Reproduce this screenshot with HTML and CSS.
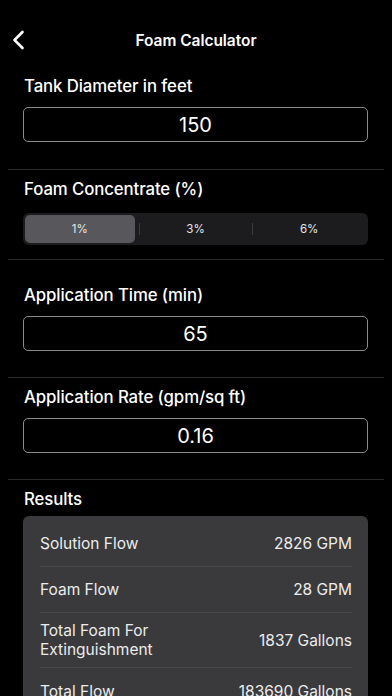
FILE: index.html
```
<!DOCTYPE html>
<html lang="en">
<head>
<meta charset="utf-8">
<title>Foam Calculator</title>
<link rel="stylesheet" href="styles.css">
</head>
<body>
<div class="screen">
  <header class="nav">
    <div class="nav-left">
      <svg class="back" width="14" height="20" viewBox="0 0 14 20"><path d="M11.5 2 L3.5 10 L11.5 18" fill="none" stroke="#fff" stroke-width="2.6" stroke-linecap="round" stroke-linejoin="round"/></svg>
    </div>
    <div class="nav-title">Foam Calculator</div>
    <div class="nav-right"></div>
  </header>

  <section class="section s-tank">
    <div class="label">Tank Diameter in feet</div>
    <div class="input">150</div>
  </section>

  <section class="section s-conc">
    <div class="label">Foam Concentrate (%)</div>
    <div class="segmented">
      <div class="seg selected">1%</div>
      <div class="seg">3%</div>
      <div class="seg">6%</div>
    </div>
  </section>

  <section class="section s-time">
    <div class="label">Application Time (min)</div>
    <div class="input">65</div>
  </section>

  <section class="section s-rate">
    <div class="label">Application Rate (gpm/sq ft)</div>
    <div class="input">0.16</div>
  </section>

  <section class="results">
    <div class="label">Results</div>
    <div class="card">
      <div class="row"><div class="row-name">Solution Flow</div><div class="row-val">2826 GPM</div></div>
      <div class="row"><div class="row-name">Foam Flow</div><div class="row-val">28 GPM</div></div>
      <div class="row"><div class="row-name">Total Foam For<br>Extinguishment</div><div class="row-val">1837 Gallons</div></div>
      <div class="row"><div class="row-name">Total Flow</div><div class="row-val">183690 Gallons</div></div>
    </div>
  </section>
</div>
</body>
</html>
```

FILE: styles.css
```
html, body {
  margin: 0;
  padding: 0;
  background: #000;
  color: #fff;
  font-family: Inter, "Liberation Sans", sans-serif;
  overflow: hidden;
}
.screen {
  width: 392px;
  height: 696px;
  overflow: hidden;
}
.nav {
  display: grid;
  grid-template-columns: 1fr auto 1fr;
  align-items: center;
  height: 44px;
  margin-top: 18px;
}
.nav-left {
  display: flex;
  align-items: center;
  padding-left: 11px;
}
.back { display: block; }
.nav-title {
  font-size: 15.5px;
  font-weight: 600;
  letter-spacing: -0.05px;
}
.section {
  margin: 0 8px;
  padding: 0 16px 0 15px;
  border-bottom: 1px solid #2a2a2c;
}
.label {
  font-size: 16.8px;
  font-weight: 500;
  line-height: 22px;
  padding-left: 1px;
  letter-spacing: -0.1px;
}
.input {
  box-sizing: border-box;
  height: 35px;
  margin-top: 10px;
  border: 1px solid #8a8a8c;
  border-radius: 5px;
  display: flex;
  align-items: center;
  justify-content: center;
  font-size: 20px;
  font-weight: 400;
}
.s-tank { padding-top: 13px; padding-bottom: 27px; }
.s-conc { padding-top: 8px; padding-bottom: 14px; }
.s-time { padding-top: 24px; padding-bottom: 26px; }
.s-rate { padding-top: 8px; padding-bottom: 26px; }
.segmented {
  margin-top: 13px;
  height: 32px;
  box-sizing: border-box;
  padding: 2px;
  background: #1c1c1e;
  border-radius: 6px;
  display: grid;
  grid-template-columns: 1fr 1fr 1fr;
}
.seg {
  display: flex;
  align-items: center;
  justify-content: center;
  font-size: 11.5px;
  color: #e6e6e6;
  border-radius: 5px;
  position: relative;
}
.seg + .seg::before {
  content: "";
  position: absolute;
  left: 0;
  top: 8px;
  bottom: 8px;
  width: 1px;
  background: #3a3a3c;
}
.seg.selected {
  background: #58585c;
  margin-right: 4px;
}
.results {
  margin: 0;
  padding: 8px 24px 0 23px;
}
.results .label { padding-left: 1px; }
.card {
  margin-top: 6px;
  background: #3a3a3c;
  border-radius: 6px;
  padding: 5px 16px 0 17px;
}
.row {
  display: flex;
  align-items: center;
  justify-content: space-between;
  min-height: 46px;
  box-sizing: border-box;
  padding: 8px 0;
  border-bottom: 1px solid #4a4a4c;
  font-size: 15.5px;
  line-height: 19px;
  color: #ececec;
}
.row:last-child { border-bottom: none; }
```
